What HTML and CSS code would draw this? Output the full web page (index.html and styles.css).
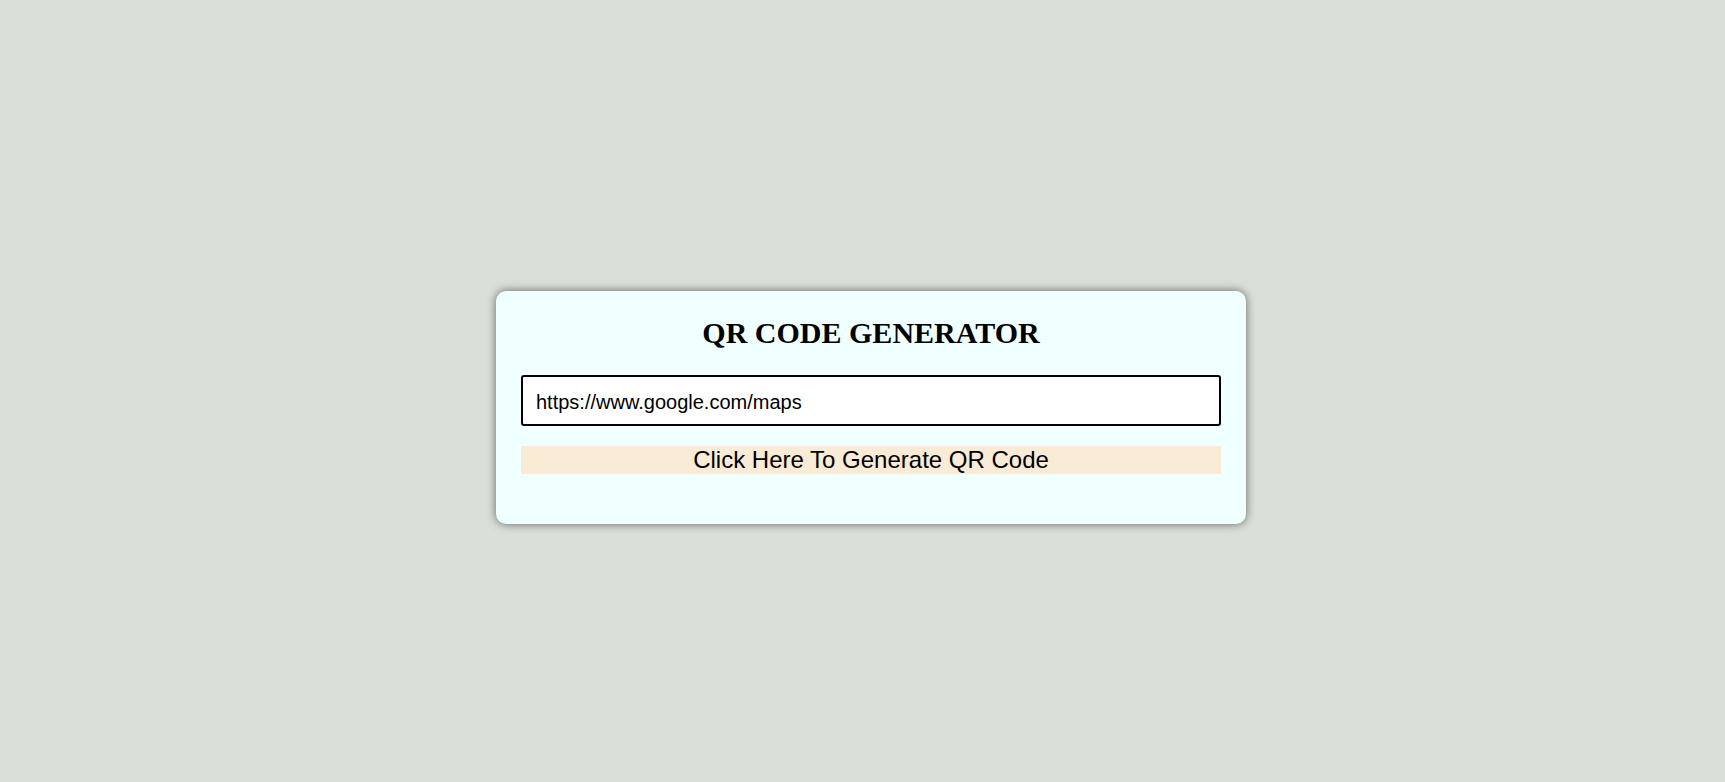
FILE: index.html
```html
<!DOCTYPE html>
<html>
<head>
<meta charset="utf-8">
<title>QR Code Generator</title>
<link rel="stylesheet" href="styles.css">
</head>
<body>
<div class="page">
  <div class="card">
    <h1 class="title">QR CODE GENERATOR</h1>
    <input class="url-input" type="text" value="https://www.google.com/maps">
    <button class="gen-btn">Click Here To Generate QR Code</button>
  </div>
</div>
</body>
</html>
```
FILE: styles.css
```css
html, body {
  margin: 0;
  padding: 0;
}
body {
  background: #dadfd8;
  font-family: "Liberation Serif", serif;
}
.page {
  box-sizing: border-box;
  height: 100vh;
  padding: 33px 0 0 17px;
  display: flex;
  align-items: center;
  justify-content: center;
}
.card {
  box-sizing: border-box;
  width: 750px;
  height: 233px;
  background: #f0ffff;
  border-radius: 10px;
  box-shadow: 0 0 10px rgba(0, 0, 0, 0.55);
  padding: 24px 25px 0;
  display: flex;
  flex-direction: column;
}
.title {
  margin: 0 0 25px;
  text-align: center;
  font-family: "Liberation Serif", serif;
  font-size: 30px;
  line-height: 35px;
  font-weight: bold;
  color: #000;
}
.url-input {
  box-sizing: border-box;
  width: 700px;
  height: 51px;
  flex: none;
  border: 2px solid #000;
  border-radius: 3px;
  padding: 4px 13px 0;
  font-family: "Liberation Sans", Arial, sans-serif;
  font-size: 20px;
  color: #000;
  background: #fff;
  outline: none;
}
.gen-btn {
  margin-top: 20px;
  width: 700px;
  height: 28px;
  flex: none;
  border: none;
  padding: 0;
  background: #faebd7;
  font-family: "Liberation Sans", Arial, sans-serif;
  font-size: 24px;
  color: #000;
}
```
